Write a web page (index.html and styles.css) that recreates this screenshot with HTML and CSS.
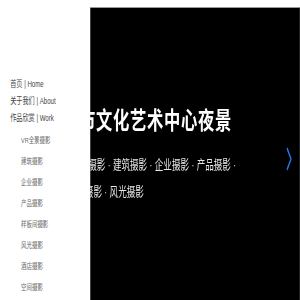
FILE: index.html
```html
<!DOCTYPE html>
<html lang="zh-CN">
<head>
    <meta charset="UTF-8">
    <meta name="viewport" content="width=device-width, initial-scale=1.0">
    <title>作品欣赏</title>
    <link rel="stylesheet" href="styles.css">
</head>
<body>
    <div class="page">
        <nav class="side-nav">
            <a href="#" class="nav-item">首页 | Home</a>
            <a href="#" class="nav-item">关于我们 | About</a>
            <a href="#" class="nav-item">作品欣赏 | Work</a>
            <ul class="sub-nav">
                <li><a href="#">VR全景摄影</a></li>
                <li><a href="#">建筑摄影</a></li>
                <li><a href="#">企业摄影</a></li>
                <li><a href="#">产品摄影</a></li>
                <li><a href="#">样板间摄影</a></li>
                <li><a href="#">风光摄影</a></li>
                <li><a href="#">酒店摄影</a></li>
                <li><a href="#">空间摄影</a></li>
            </ul>
            <a href="#" class="nav-item">联系我们 | Contact</a>
        </nav>

        <section class="slider">
            <div class="caption">
                <h2>城市文化艺术中心夜景</h2>
                <p>
                    <span class="tag">VR全景摄影 ·</span>
                    <span class="tag">建筑摄影 ·</span>
                    <span class="tag">企业摄影 ·</span>
                    <span class="tag">产品摄影 ·</span>
                    <span class="tag">样板间摄影 ·</span>
                    <span class="tag">风光摄影</span>
                </p>
            </div>
            <a href="#" class="arrow-next">
                <svg width="8" height="24" viewBox="0 0 8 24">
                    <polyline points="1,1 7,12 1,23" fill="none" stroke="#1f7ae0" stroke-width="2"/>
                </svg>
            </a>
        </section>
    </div>
</body>
</html>
```

FILE: styles.css
```css
html, body {
    margin: 0;
    height: 100%;
    overflow: hidden;
    background: #fff;
}
/* the whole layout is drawn narrow, like the original condensed page */
.page {
    display: flex;
    align-items: flex-start;
    width: 441px;
    height: 300px;
    padding-top: 7px;
    box-sizing: border-box;
    transform: scaleX(0.68);
    transform-origin: 0 0;
    font-family: "Liberation Sans", "Noto Sans CJK SC", sans-serif;
}
.side-nav {
    position: relative;
    z-index: 2;
    width: 132px;
    flex-shrink: 0;
    padding-top: 69px;
    background: #fff;
}
.nav-item {
    display: block;
    padding-left: 15px;
    font-size: 9px;
    line-height: 17px;
    color: #444;
    text-decoration: none;
}
.sub-nav {
    list-style: none;
    margin: 3px 0 0;
    padding: 0 0 0 31px;
}
.sub-nav a {
    display: block;
    font-size: 8px;
    line-height: 21px;
    color: #666;
    text-decoration: none;
}
.slider {
    position: relative;
    flex: 1;
    height: 400px;
    padding-top: 98px;
    background: #000;
    border-top: 1px solid #999;
    border-left: 1px solid #999;
}
.caption {
    margin-left: -46px;
    width: 280px;
    color: #fff;
}
.caption h2 {
    margin: 0;
    padding-left: 4px;
    font-size: 24px;
    line-height: 30px;
    font-weight: bold;
    letter-spacing: 1px;
    white-space: nowrap;
}
.caption p {
    margin: 16px 0 0;
    font-size: 12.6px;
    line-height: 27px;
    color: #e6e6e6;
}
.tag {
    white-space: nowrap;
}
.arrow-next {
    position: absolute;
    top: 139px;
    right: 12px;
    display: block;
    line-height: 0;
}
```
